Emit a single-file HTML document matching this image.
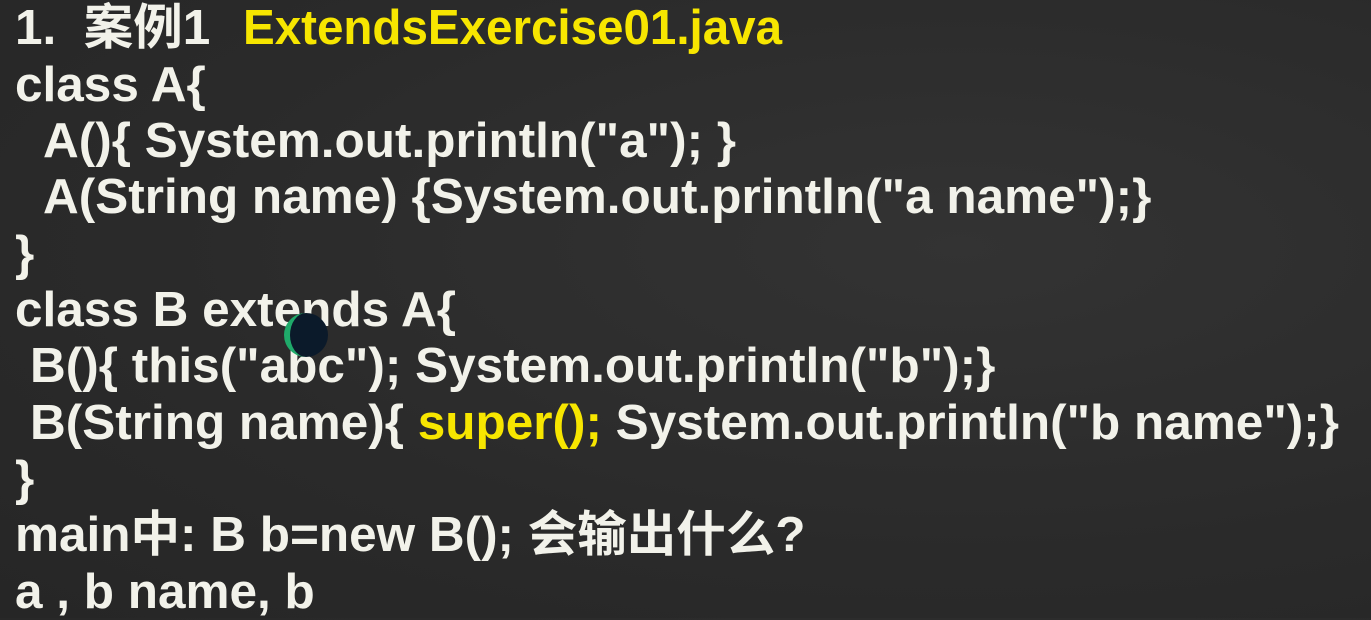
<!DOCTYPE html>
<html><head><meta charset="utf-8"><style>
html,body{margin:0;padding:0;}
body{width:1371px;height:618px;overflow:hidden;background:#2a2a2a;position:relative;
background-image:radial-gradient(ellipse at 70% 40%,#333 0%,#2a2a2a 60%,#262626 100%);}
.l{position:absolute;white-space:pre;font-family:"Liberation Sans","Noto Sans CJK SC",sans-serif;font-weight:bold;font-size:49px;line-height:56px;color:#f2f2ea;transform-origin:0 0;transform:scaleX(1.01);}
.y{color:#f7e600;}
</style></head><body>
<div class="l" style="left:15px;top:0px;">1.  案例1</div>
<div class="l y" style="left:243px;top:0px;transform:scaleX(0.97)">ExtendsExercise01.java</div>
<div class="l" style="left:15px;top:57px;">class A{</div>
<div class="l" style="left:43px;top:113px;">A(){ System.out.println("a"); }</div>
<div class="l" style="left:43px;top:169px;">A(String name) {System.out.println("a name");}</div>
<div class="l" style="left:15px;top:226px;">}</div>
<div class="l" style="left:15px;top:282px;">class B extends A{</div>
<div class="l" style="left:30px;top:338px;">B(){ this("abc"); System.out.println("b");}</div>
<div class="l" style="left:30px;top:395px;">B(String name){ <span class="y">super();</span> System.out.println("b name");}</div>
<div class="l" style="left:15px;top:451px;">}</div>
<div class="l" style="left:15px;top:507px;">main中: B b=new B(); 会输出什么?</div>
<div class="l" style="left:15px;top:564px;">a , b name, b</div>
<div style="position:absolute;left:284px;top:313px;width:44px;height:44px;border-radius:50%;background:#0b1a2a;border-left:6px solid #1faa6a;box-sizing:border-box;"></div>
</body></html>
